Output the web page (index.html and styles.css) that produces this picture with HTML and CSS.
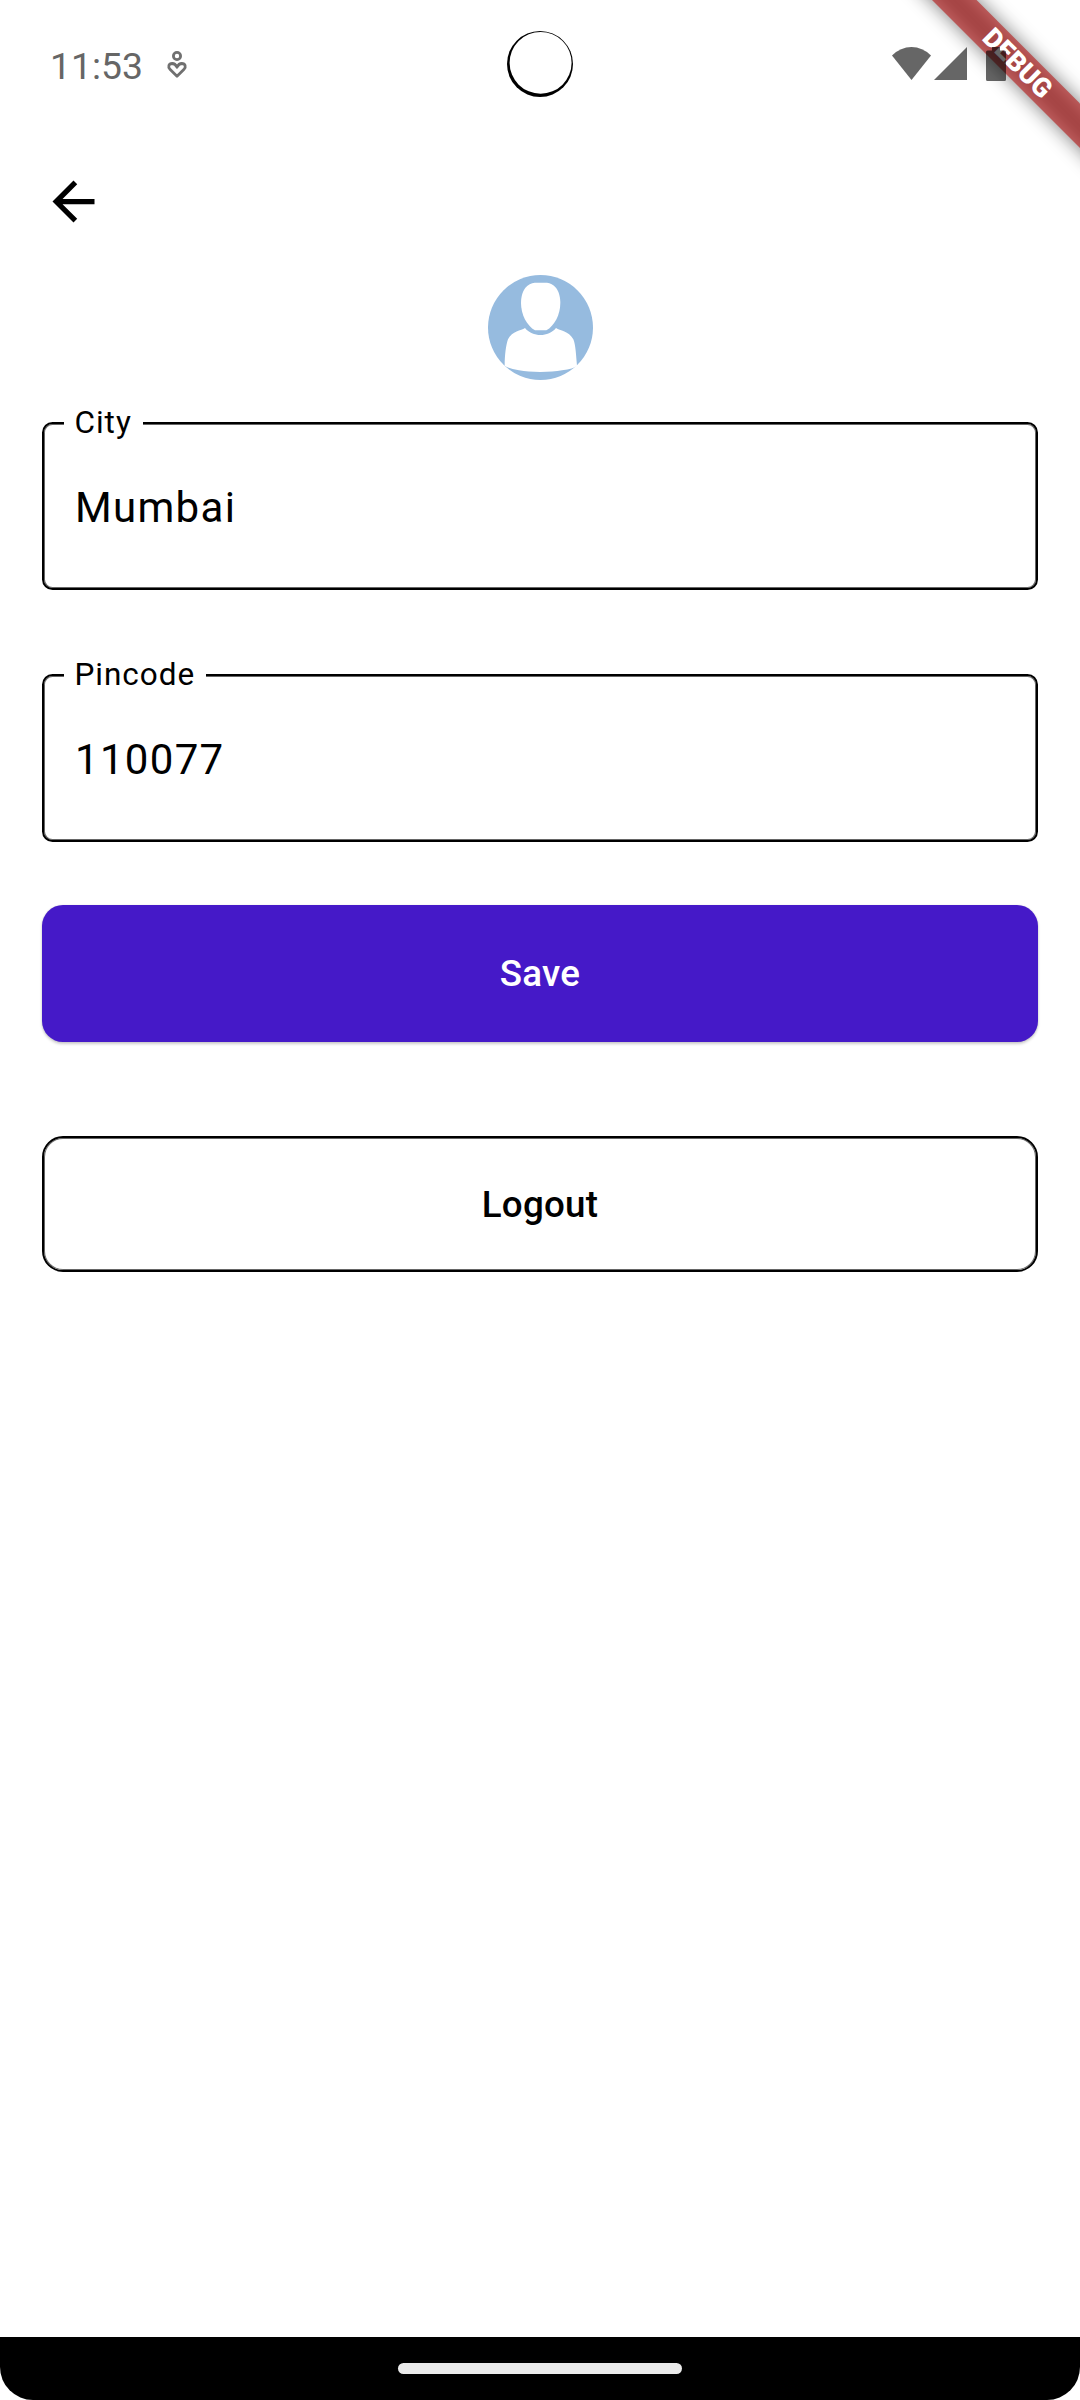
FILE: index.html
```html
<!DOCTYPE html>
<html lang="en">
<head>
<meta charset="utf-8">
<title>Profile</title>
<link rel="stylesheet" href="styles.css">
</head>
<body>
<div class="screen">
  <header class="status-bar">
    <div class="status-left">
      <span class="clock">11:53</span>
      <svg class="care" viewBox="0 0 22 30" fill="none" stroke="#707070" stroke-width="2.8">
        <circle cx="11" cy="7" r="3.6"/>
        <path d="M11 27.200 L4.200 20.600 C1.500 17.800 2.700 14.700 6.300 14.500 C8.600 14.500 10 16.200 11 18.200 C12 16.200 13.400 14.500 15.700 14.500 C19.300 14.700 20.500 17.800 17.800 20.600 Z" stroke-linejoin="round"/>
      </svg>
    </div>
    <svg class="camera" viewBox="0 0 66 66">
      <circle cx="33" cy="33" r="33" fill="#000"/>
      <ellipse cx="33.600" cy="31.800" rx="31" ry="30.900" fill="#fff"/>
    </svg>
    <div class="status-right">
      <svg class="wifi" viewBox="0 0 39 33"><path d="M0 8.500 Q8.500 0 19.500 0 T39 8.500 L19.500 33Z" fill="#666"/></svg>
      <svg class="signal" viewBox="0 0 33 33"><path d="M0 33 L33 0V33Z" fill="#666"/></svg>
      <svg class="battery" viewBox="0 0 20 34"><path d="M6 0H14V3.500H18.500Q20 3.500 20 5V32.500Q20 34 18.500 34H1.500Q0 34 0 32.500V5Q0 3.500 1.500 3.500H6Z" fill="#000" fill-opacity=".6"/></svg>
    </div>
  </header>

  <nav class="app-bar">
    <svg class="back" viewBox="0 0 24 24"><path d="M20 11H7.830l5.590-5.590L12 4l-8 8 8 8 1.410-1.410L7.830 13H20v-2z"/></svg>
  </nav>

  <main class="content">
    <svg class="avatar" viewBox="0 0 315 315">
      <circle cx="157.500" cy="157.500" r="157.500" fill="#96bbdf"/>
      <path d="M140 23H177C196 26 216 40 217 83C217 120 199 152 175 166H141C117 152 99 120 99 83C100 40 120 26 140 23Z" fill="#fff"/>
      <path d="M111 159C134 187 181 187 204 159C216 167 242 167 256 193C263 210 264 240 267 272Q257 281 222 286Q195 291 157 291Q120 291 93 286Q60 280 50 272C50 240 54 210 60 193C73 167 99 167 111 159Z" fill="#fff"/>
    </svg>
    <fieldset class="field">
      <legend>City</legend>
      <div class="value">Mumbai</div>
    </fieldset>
    <fieldset class="field">
      <legend>Pincode</legend>
      <div class="value">110077</div>
    </fieldset>
    <button class="btn save">Save</button>
    <button class="btn logout">Logout</button>
  </main>

  <footer class="nav-bar"><div class="handle"></div></footer>

  <svg class="banner" viewBox="0 0 240 240">
    <defs>
      <filter id="soft" x="-20%" y="-150%" width="140%" height="400%"><feGaussianBlur stdDeviation="9.500"/></filter>
    </defs>
    <g transform="translate(177.200 62.900) rotate(45)">
      <rect x="-135" y="-15.750" width="270" height="31.500" fill="#000" fill-opacity=".5" filter="url(#soft)"/>
      <rect x="-135" y="-15.750" width="270" height="31.500" fill="#b71c1c" fill-opacity=".627"/>
      <text class="banner-text" x="0.500" y="9" text-anchor="middle">DEBUG</text>
    </g>
  </svg>
</div>
</body>
</html>
```
FILE: styles.css
```css
* { box-sizing: border-box; }
body { margin: 0; background: #fff; font-family: Roboto, sans-serif; color: #000; }
svg { display: block; }
.screen {
  position: relative;
  width: 1080px;
  height: 2400px;
  overflow: hidden;
  display: flex;
  flex-direction: column;
}
.status-bar {
  height: 128px;
  display: grid;
  grid-template-columns: 1fr 66px 1fr;
  padding: 0 74px 0 50px;
}
.status-left { display: flex; padding-top: 44px; }
.clock { font-size: 37.300px; line-height: 44px; color: #666; width: 116px; }
.care { width: 22px; height: 30px; margin-top: 5px; }
.camera { width: 66px; height: 66px; margin: 31px 0 0 12px; }
.status-right { display: flex; justify-content: flex-end; padding-top: 47px; }
.wifi { width: 39px; height: 33px; }
.signal { width: 33px; height: 33px; margin: 0 19px 0 3px; }
.battery { width: 20px; height: 34px; position: relative; z-index: 2; }
.app-bar { height: 147px; padding: 42px 42px 0; }
.back { width: 63px; height: 63px; }
.content {
  flex: 1;
  display: flex;
  flex-direction: column;
  padding: 0 42px;
}
.avatar { width: 105px; height: 105px; align-self: center; }
.field {
  margin: 24px 0 0;
  height: 186px;
  border: 2px solid #000;
  border-radius: 10.500px;
  box-shadow: inset 0 0 0 1px rgba(0, 0, 0, .6);
  padding: 0 0 0 31px;
  min-width: 0;
}
.field + .field { margin-top: 66px; }
.field legend {
  height: 38px;
  line-height: 38px;
  margin-left: -11px;
  padding: 0 11px 0 10.500px;
  font-size: 31.500px;
  letter-spacing: .98px;
  background: #fff;
}
.value { font-size: 42px; line-height: 50px; letter-spacing: 1.310px; margin-top: 41px; }
.btn {
  height: 136px;
  border-radius: 21px;
  border: 0;
  padding: 2px 0 0;
  font: 500 36.750px/44px Roboto, sans-serif;
  letter-spacing: .26px;
}
.save {
  margin-top: 63px;
  height: 136.500px;
  background: #4519c8;
  color: #fff;
  box-shadow: 0 2px 3px rgba(0, 0, 0, .2), 0 0 2px rgba(0, 0, 0, .1);
}
.logout {
  margin-top: 94.500px;
  background: #fff;
  color: #000;
  border: 2px solid #000;
  box-shadow: inset 0 0 0 1px rgba(0, 0, 0, .6);
}
.nav-bar {
  height: 63px;
  background: #000;
  border-radius: 0 0 33px 33px;
  padding-top: 26px;
}
.handle { width: 284px; height: 11px; margin: 0 auto; border-radius: 6px; background: #ebebeb; }
.banner { position: absolute; top: 0; right: 0; width: 240px; height: 240px; z-index: 1; }
.banner-text { font: 900 26.800px Roboto, sans-serif; fill: #fff; }
```
